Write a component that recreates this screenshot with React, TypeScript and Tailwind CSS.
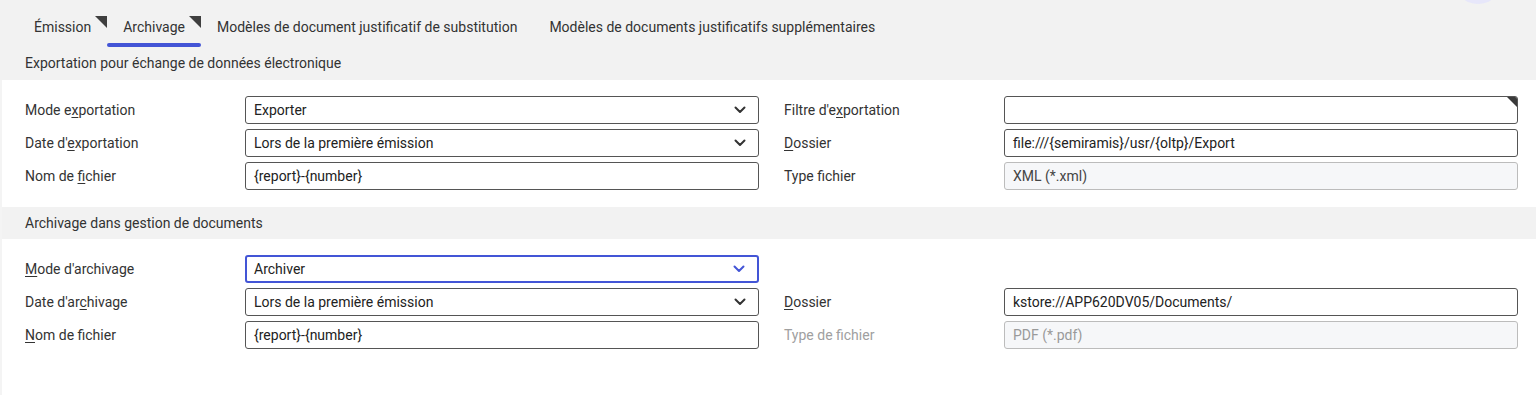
import React from 'react';

type Field = {
  label: React.ReactNode;
  value: string;
  kind: 'select' | 'text' | 'readonly';
  focused?: boolean;
  marker?: boolean;
  dim?: boolean;
};

// lettre soulignée (raccourci clavier)
const U = ({ children }: { children: React.ReactNode }) => <span className="underline underline-offset-2">{children}</span>;

const Chevron = ({ blue }: { blue?: boolean }) => (
  <svg width="12" height="8" viewBox="0 0 12 8" className={blue ? 'text-[#4355d6]' : 'text-[#333]'}>
    <polyline points="1.5,1.5 6,6 10.5,1.5" fill="none" stroke="currentColor" strokeWidth="2" strokeLinecap="round" strokeLinejoin="round" />
  </svg>
);

const Input = ({ f }: { f: Field }) => {
  if (f.kind === 'readonly') {
    return (
      <div
        className={
          'h-[28px] flex items-center px-2 rounded-[3px] border border-[#bcbcbc] bg-[#f6f7f9] ' +
          (f.dim ? 'text-[#9a9a9a]' : 'text-[#444]')
        }
      >
        {f.value}
      </div>
    );
  }
  return (
    <div
      className={
        'relative h-[28px] flex items-center justify-between pl-2 pr-3 rounded-[3px] bg-white text-[#222] ' +
        (f.focused ? 'border-2 border-[#4355d6] pl-[7px]' : 'border border-[#555]')
      }
    >
      <span>{f.value}</span>
      {f.kind === 'select' && <Chevron blue={f.focused} />}
      {f.marker && (
        <span className="absolute top-0 right-0 w-0 h-0 border-t-[10px] border-l-[10px] border-t-[#3a3a3a] border-l-transparent rounded-tr-[2px]" />
      )}
    </div>
  );
};

const Row = ({ left, right }: { left: Field; right?: Field }) => (
  <>
    <div className="flex items-center">{left.label}</div>
    <Input f={left} />
    <div className={'flex items-center pl-[25px] ' + (right?.dim ? 'text-[#a0a0a0]' : '')}>{right?.label}</div>
    {right ? <Input f={right} /> : <div />}
  </>
);

const TabMark = () => (
  <span className="absolute top-2 right-0 w-0 h-0 border-t-[12px] border-l-[12px] border-t-[#3f3f3f] border-l-transparent" />
);

const tabs = [
  { label: 'Émission', mark: true },
  { label: 'Archivage', mark: true, active: true },
  { label: 'Modèles de document justificatif de substitution' },
  { label: 'Modèles de documents justificatifs supplémentaires' },
];

export default function App() {
  return (
    <div className="relative w-[1536px] h-[395px] overflow-hidden bg-white text-[14px] text-[#333] font-['Roboto','Liberation_Sans',sans-serif]">
      <div className="absolute -top-[44px] left-[1454px] w-[48px] h-[48px] rounded-full bg-[#e7e7fa]" />

      {/* entête avec onglets */}
      <div className="bg-[#f2f2f2] h-[80px]">
        <div className="flex pl-[18px] pt-2">
          {tabs.map((t) => (
            <div key={t.label} className="relative h-[39px] px-4 flex items-center">
              {t.label}
              {t.mark && <TabMark />}
              {t.active && <span className="absolute left-0 right-0 bottom-0 h-[4px] rounded-full bg-[#4355d6]" />}
            </div>
          ))}
        </div>
        <div className="pl-[25px] h-[33px] flex items-center">Exportation pour échange de données électronique</div>
      </div>

      <div className="border-l-2 border-[#f4f4f4]">
        <div className="grid grid-cols-[220px_1fr_245px_1fr] gap-y-[5px] pl-[23px] pr-[18px] pt-4 pb-[17px]">
          <Row
            left={{ label: <span>Mode e<U>x</U>portation</span>, value: 'Exporter', kind: 'select' }}
            right={{ label: <span>Filtre d'e<U>x</U>portation</span>, value: '', kind: 'text', marker: true }}
          />
          <Row
            left={{ label: <span>Date d'<U>e</U>xportation</span>, value: 'Lors de la première émission', kind: 'select' }}
            right={{ label: <span><U>D</U>ossier</span>, value: 'file:///{semiramis}/usr/{oltp}/Export', kind: 'text' }}
          />
          <Row
            left={{ label: <span>Nom de <U>fi</U>chier</span>, value: '{report}-{number}', kind: 'text' }}
            right={{ label: <span>Type fichier</span>, value: 'XML (*.xml)', kind: 'readonly' }}
          />
        </div>

        <div className="bg-[#f2f2f2] h-[32px] flex items-center pl-[23px]">Archivage dans gestion de documents</div>

        <div className="grid grid-cols-[220px_1fr_245px_1fr] gap-y-[5px] pl-[23px] pr-[18px] pt-4 pb-12">
          <Row left={{ label: <span><U>M</U>ode d'archivage</span>, value: 'Archiver', kind: 'select', focused: true }} />
          <Row
            left={{ label: <span>Date d'ar<U>c</U>hivage</span>, value: 'Lors de la première émission', kind: 'select' }}
            right={{ label: <span><U>D</U>ossier</span>, value: 'kstore://APP620DV05/Documents/', kind: 'text' }}
          />
          <Row
            left={{ label: <span><U>N</U>om de fichier</span>, value: '{report}-{number}', kind: 'text' }}
            right={{ label: <span>Type de fichier</span>, value: 'PDF (*.pdf)', kind: 'readonly', dim: true }}
          />
        </div>
      </div>
    </div>
  );
}
